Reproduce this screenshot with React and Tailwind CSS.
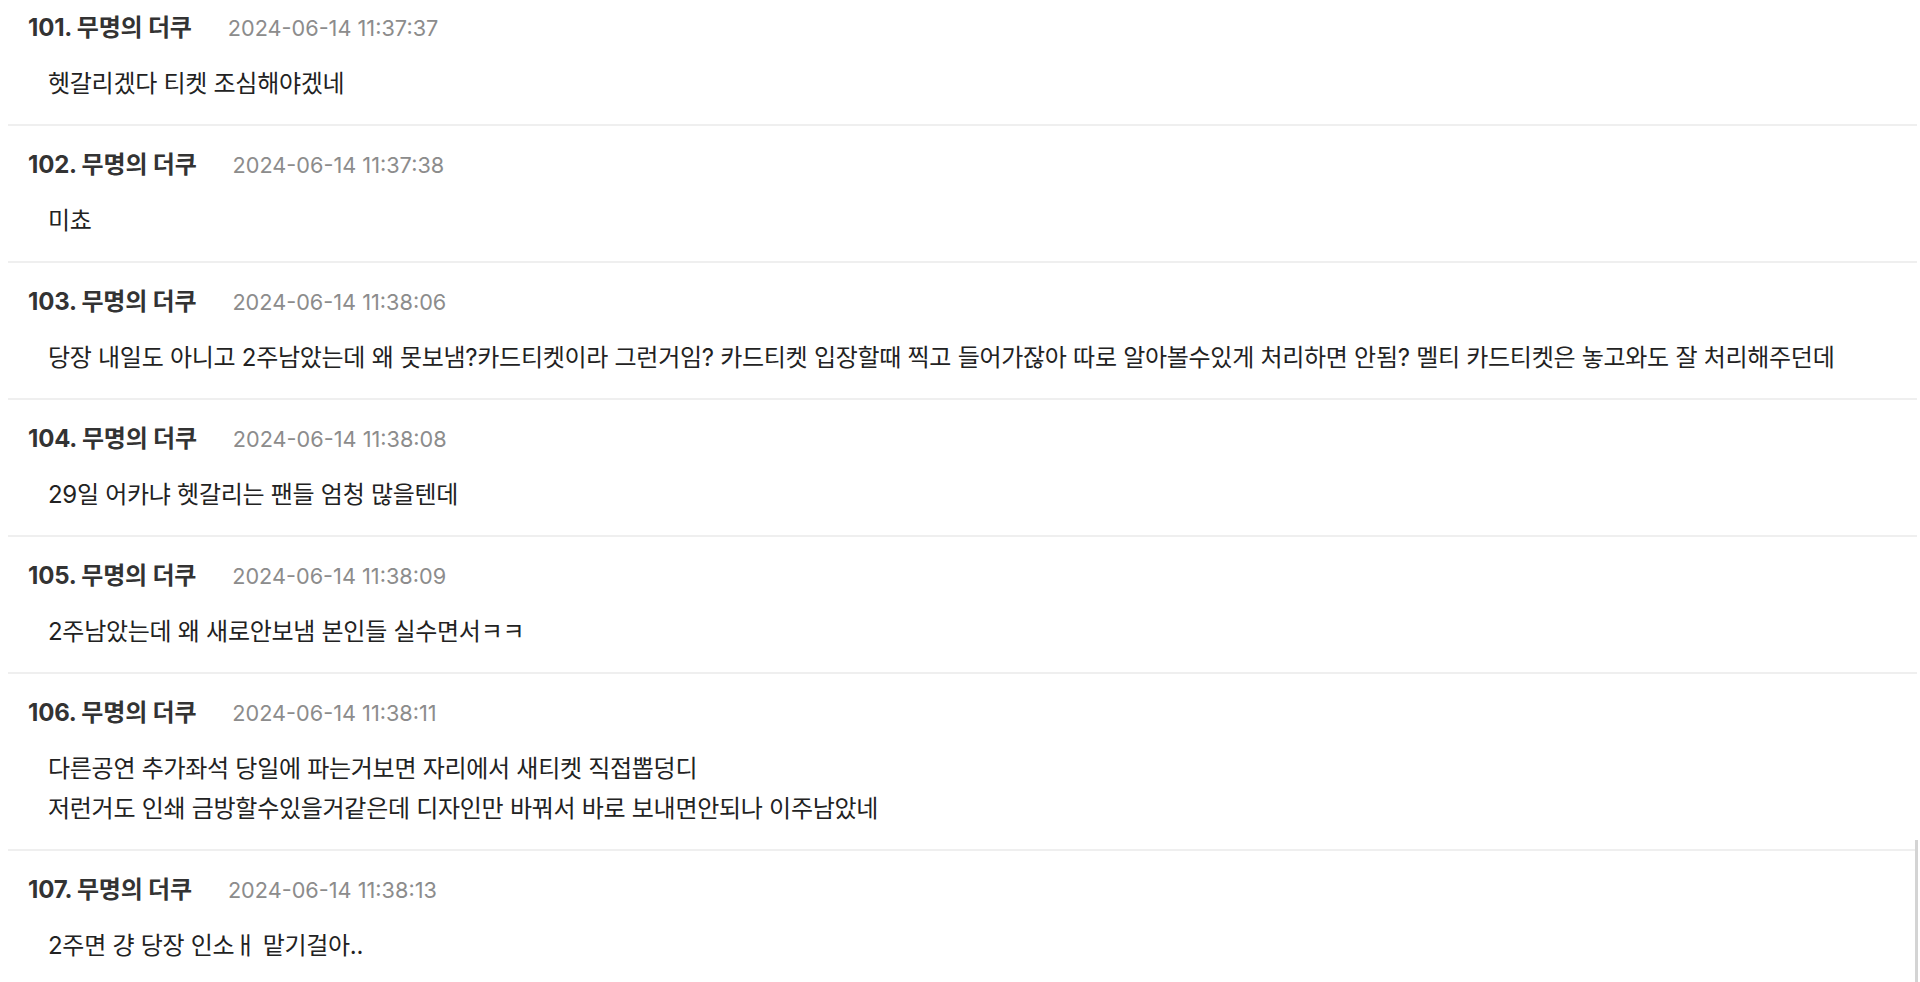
const comments = [
  { no: 101, time: "2024-06-14 11:37:37", lines: ["헷갈리겠다 티켓 조심해야겠네"] },
  { no: 102, time: "2024-06-14 11:37:38", lines: ["미쵸"] },
  {
    no: 103,
    time: "2024-06-14 11:38:06",
    lines: [
      "당장 내일도 아니고 2주남았는데 왜 못보냄?카드티켓이라 그런거임? 카드티켓 입장할때 찍고 들어가잖아 따로 알아볼수있게 처리하면 안됨? 멜티 카드티켓은 놓고와도 잘 처리해주던데",
    ],
  },
  { no: 104, time: "2024-06-14 11:38:08", lines: ["29일 어카냐 헷갈리는 팬들 엄청 많을텐데"] },
  { no: 105, time: "2024-06-14 11:38:09", lines: ["2주남았는데 왜 새로안보냄 본인들 실수면서ㅋㅋ"] },
  {
    no: 106,
    time: "2024-06-14 11:38:11",
    lines: [
      "다른공연 추가좌석 당일에 파는거보면 자리에서 새티켓 직접뽑덩디",
      "저런거도 인쇄 금방할수있을거같은데 디자인만 바꿔서 바로 보내면안되나 이주남았네",
    ],
  },
  { no: 107, time: "2024-06-14 11:38:13", lines: ["2주면 걍 당장 인소ㅐ 맡기걸아.."] },
];

export default function App() {
  return (
    <div
      className="relative h-[982px] overflow-hidden bg-white"
      style={{ fontFamily: '"Inter", "Noto Sans CJK KR", sans-serif' }}
    >
      <div className="ml-2 mr-[3px]">
        {comments.map((c, i) => (
          <div
            key={c.no}
            className={
              (i === 0 ? "pt-3 " : "pt-[23px] ") +
              (i < comments.length - 1 ? "border-b-2 border-[#efefef] " : "") +
              "pb-5 pl-5"
            }
          >
            <div className="flex items-baseline gap-[36px] h-8 leading-8">
              <span className="text-[24px] font-bold text-[#333333] tracking-[-0.2px]">
                {c.no}. 무명의 더쿠
              </span>
              <span className="text-[21.7px] text-[#8c8c8c]">{c.time}</span>
            </div>
            <div className="mt-5 pl-5 text-[24px] leading-10 text-[#222222] tracking-[-0.28px]">
              {c.lines.map((l, j) => (
                <p key={j} className="whitespace-nowrap">{l}</p>
              ))}
            </div>
          </div>
        ))}
      </div>
      <div className="absolute right-[2px] top-[840px] bottom-0 w-[3px] bg-[#d4d4d4]" />
    </div>
  );
}
